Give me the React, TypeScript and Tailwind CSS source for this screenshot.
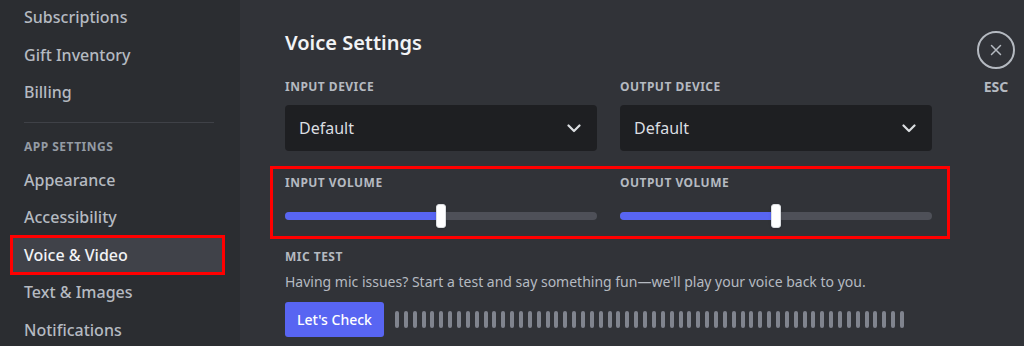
import { ReactNode } from "react";

const accountItems = ["Subscriptions", "Gift Inventory", "Billing"];
const appItems = ["Appearance", "Accessibility", "Voice & Video", "Text & Images", "Notifications"];

function SideItem({ label, active }: { label: string; active?: boolean }) {
  return (
    <div
      className={`flex h-[34px] w-[209px] items-center pl-[11px] text-[16px] font-medium ${
        active ? "bg-[#404249] text-[#f2f3f5] ring-3 ring-[#ff0000]" : "rounded-[4px] text-[#b5bac1]"
      }`}
    >
      {label}
    </div>
  );
}

function Label({ children }: { children: ReactNode }) {
  return (
    <div className="text-[12px] font-bold uppercase leading-[16px] tracking-[0.04em] text-[#b5bac1]">
      {children}
    </div>
  );
}

function Select({ label }: { label: string }) {
  return (
    <div className="w-[312px]">
      <Label>{label}</Label>
      <div className="mt-[10px] flex h-[46px] items-center justify-between rounded-[4px] bg-[#1e1f22] pl-[14px] pr-[16px] text-[16px] text-[#dbdee1]">
        <span>Default</span>
        <svg width="14" height="9" viewBox="0 0 14 9" fill="none">
          <path d="M1.5 1.5L7 7l5.5-5.5" stroke="#dbdee1" strokeWidth="2.2" strokeLinecap="round" strokeLinejoin="round" />
        </svg>
      </div>
    </div>
  );
}

function Slider({ label, value }: { label: string; value: number }) {
  return (
    <div className="w-[312px]">
      <Label>{label}</Label>
      <div className="relative mt-[13px] flex h-[24px] items-center">
        <div className="h-[8px] w-full rounded-full bg-[#4e5058]">
          <div className="h-full rounded-full bg-[#5865f2]" style={{ width: `${value}%` }} />
        </div>
        <div
          className="absolute top-0 h-[24px] w-[10px] -translate-x-1/2 rounded-[3px] border border-[#dbdee1] bg-white shadow"
          style={{ left: `${value}%` }}
        />
      </div>
    </div>
  );
}

export default function App() {
  const bars = Array.from({ length: 58 });

  return (
    <div className="flex h-[346px] w-[1024px] overflow-hidden font-['Noto_Sans',sans-serif]">
      {/* Sidebar */}
      <aside className="w-[240px] shrink-0 bg-[#2b2d31] pl-[13px]">
        <div className="flex flex-col gap-[3.5px]">
          {accountItems.map((item) => (
            <SideItem key={item} label={item} />
          ))}
        </div>
        <div className="ml-[11px] mt-[12.5px] h-px w-[190px] bg-[#3f4147]" />
        <div className="ml-[11px] mt-[16px] text-[12px] font-bold uppercase leading-[16px] tracking-[0.04em] text-[#949ba4]">
          App Settings
        </div>
        <div className="mt-[8px] flex flex-col gap-[3.5px]">
          {appItems.map((item) => (
            <SideItem key={item} label={item} active={item === "Voice & Video"} />
          ))}
        </div>
      </aside>

      {/* Content */}
      <main className="flex flex-1 bg-[#313338] pl-[45px] pt-[31px]">
        <div className="w-[647px]">
          <h2 className="text-[20px] font-semibold leading-[24px] text-[#f2f3f5]">Voice Settings</h2>

          <div className="mt-[24px] flex gap-[23px]">
            <Select label="Input Device" />
            <Select label="Output Device" />
          </div>

          <div className="-ml-[15px] mt-[15px] flex w-[680px] gap-[23px] border-[3px] border-[#ff0000] pb-[8px] pl-[12px] pr-[15px] pt-[6px]">
            <Slider label="Input Volume" value={50} />
            <Slider label="Output Volume" value={50} />
          </div>

          <div className="mt-[10px]">
            <Label>Mic Test</Label>
            <p className="mt-[7px] text-[14px] leading-[20px] text-[#b5bac1]">
              Having mic issues? Start a test and say something fun—we'll play your voice back to you.
            </p>
            <div className="mt-[10px] flex items-center gap-[11px]">
              <button className="flex h-[35px] w-[99px] items-center justify-center rounded-[3px] bg-[#5865f2] text-[14px] font-medium text-white">
                Let's Check
              </button>
              <div className="flex items-center gap-[4.86px]">
                {bars.map((_, i) => (
                  <div key={i} className="h-[17px] w-[4px] rounded-full bg-[#80848e]" />
                ))}
              </div>
            </div>
          </div>
        </div>

        {/* Close */}
        <div className="ml-[45px] flex flex-col items-center">
          <div className="flex h-[38px] w-[38px] items-center justify-center rounded-full border-2 border-[#b5bac1]">
            <svg width="18" height="18" viewBox="0 0 24 24" fill="none">
              <path d="M6 6l12 12M18 6L6 18" stroke="#b5bac1" strokeWidth="2" strokeLinecap="round" />
            </svg>
          </div>
          <div className="mt-[10px] text-[14px] font-bold leading-[16px] text-[#b5bac1]">ESC</div>
        </div>
      </main>
    </div>
  );
}
